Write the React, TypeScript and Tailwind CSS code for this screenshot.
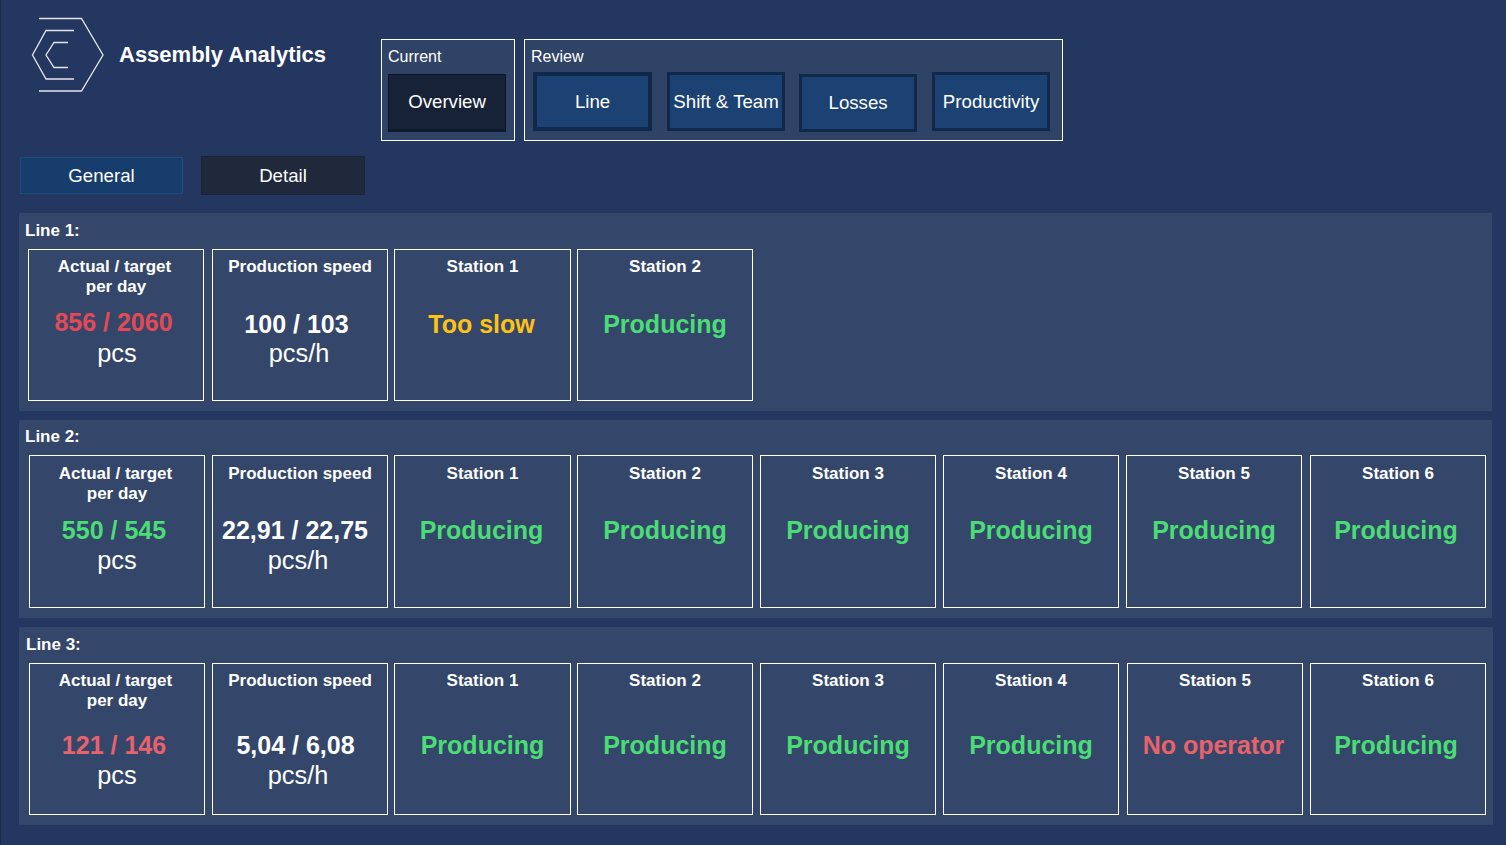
const GREEN = "text-[#4bdc76]";
const RED = "text-[#e8626b]";

type Card = {
  cls: string;
  head: string;
  title: string[];
  value: string;
  color: string;
  unit?: string;
  valueCls?: string;
  unitCls?: string;
};

function StatCard({ cls, head, title, value, color, unit, valueCls = "", unitCls = "" }: Card) {
  return (
    <div className={`shrink-0 border border-white flex flex-col items-center ${cls}`}>
      <div className={`text-[17px] leading-[20px] font-bold text-white text-center ${head}`}>
        {title.map((t, i) => (
          <div key={t} className={title.length > 1 && i === 0 ? "mr-[3px]" : ""}>
            {t}
          </div>
        ))}
      </div>
      <div className={`text-[25px] leading-[30px] font-bold whitespace-nowrap ${color} ${valueCls}`}>{value}</div>
      {unit && <div className={`text-[25.33px] leading-[30px] text-white ${unitCls}`}>{unit}</div>}
    </div>
  );
}

function Panel({ label, labelCls, cls, children }: { label: string; labelCls: string; cls: string; children: React.ReactNode }) {
  return (
    <section className={`h-[198px] ml-[18px] bg-[#34476a] ${cls}`}>
      <div className={`text-[17px] leading-[20px] font-bold text-white ${labelCls}`}>{label}</div>
      {children}
    </section>
  );
}

function NavButton({ label, cls }: { label: string; cls: string }) {
  return (
    <div className={`shrink-0 flex items-center justify-center bg-[#1b4272] border-[#10294a] text-white text-[18.67px] whitespace-nowrap ${cls}`}>
      {label}
    </div>
  );
}

const HEAD_A = "h-[59px] pt-[7px]";
const HEAD_B = "h-[59px] pt-[8px]";
const HEAD_C = "h-[66px] pt-[7px]";

export default function App() {
  return (
    <div
      className="w-[1506px] h-[845px] overflow-hidden bg-[#243760] border-l border-l-[#1c2b4c] text-white"
      style={{ fontFamily: '"Liberation Sans", Arial, sans-serif' }}
    >
      <header className="h-[156px] flex items-start">
        <svg className="ml-[29px] mt-[17px] shrink-0" width="74" height="76" viewBox="30 17 74 76" fill="none" stroke="#e3e6ec" strokeWidth="1.3">
          <path d="M39 18.5H81.5L103 55L81.5 91H39" />
          <path d="M74 30.5H46L32.5 55L46 79H74" />
          <path d="M68 42.5H54L46 55L54 67.5H68" />
        </svg>
        <h1 className="ml-[15px] mt-[41px] text-[22px] leading-[28px] font-bold text-white whitespace-nowrap">Assembly Analytics</h1>
        <div className="ml-[55px] mt-[39px] w-[134px] h-[102px] border border-white bg-[#2f4366] pl-[6px] shrink-0">
          <div className="h-[34px] pt-[7px] text-[16px] leading-[20px]">Current</div>
          <div className="w-[118px] h-[58px] flex items-center justify-center bg-[#182237] border border-[#0f1626] border-b-[3px] border-b-[#101a2e] text-[18.67px]">
            Overview
          </div>
        </div>
        <div className="ml-[9px] mt-[39px] w-[539px] h-[102px] border border-white bg-[#2f4366] pl-[6px] shrink-0">
          <div className="h-[32px] pt-[7px] text-[16px] leading-[20px]">Review</div>
          <div className="flex items-start">
            <NavButton label="Line" cls="w-[119px] h-[59px] border-[4px] ml-[2px]" />
            <NavButton label="Shift &amp; Team" cls="w-[118px] h-[59px] border-[3px] ml-[15px]" />
            <NavButton label="Losses" cls="w-[118px] h-[58px] border-[3px] ml-[14px] mt-[2px]" />
            <NavButton label="Productivity" cls="w-[118px] h-[59px] border-[3px] ml-[15px]" />
          </div>
        </div>
      </header>

      <nav className="h-[57px] flex items-start ml-[19px]">
        <div className="w-[163px] h-[37px] mt-[1px] flex items-center justify-center bg-[#173d6d] border border-[#1d4c80] text-[18.67px]">
          General
        </div>
        <div className="w-[164px] h-[39px] ml-[18px] flex items-center justify-center bg-[#20283b] border border-[#1b2337] text-[18.67px]">
          Detail
        </div>
      </nav>

      <Panel label="Line 1:" labelCls="h-[36px] pt-[8px] pl-[6px]" cls="w-[1473px] mb-[9px]">
        <div className="flex h-[152px]">
          <StatCard cls="ml-[9px] w-[176px]" head={HEAD_A} title={["Actual / target", "per day"]} value="856 / 2060" color="text-[#e34a56]" unit="pcs" valueCls="-mt-[2px] mb-[2px] mr-[5px]" unitCls="-mt-[1px] ml-[2px]" />
          <StatCard cls="ml-[8px] w-[176px]" head={HEAD_A} title={["Production speed"]} value="100 / 103" color="text-white" unit="pcs/h" valueCls="mr-[7px]" unitCls="-mt-[1px] mr-[2px]" />
          <StatCard cls="ml-[6px] w-[177px]" head={HEAD_A} title={["Station 1"]} value="Too slow" color="text-[#fdc215]" valueCls="mr-[2px]" />
          <StatCard cls="ml-[6px] w-[176px]" head={HEAD_A} title={["Station 2"]} value="Producing" color={GREEN} />
        </div>
      </Panel>

      <Panel label="Line 2:" labelCls="h-[35px] pt-[7px] pl-[6px]" cls="w-[1473px] mb-[9px]">
        <div className="flex h-[153px]">
          <StatCard cls="ml-[10px] w-[176px]" head={HEAD_B} title={["Actual / target", "per day"]} value="550 / 545" color={GREEN} unit="pcs" valueCls="mr-[6px]" />
          <StatCard cls="ml-[7px] w-[176px]" head={HEAD_B} title={["Production speed"]} value="22,91 / 22,75" color="text-white" unit="pcs/h" valueCls="mr-[10px]" unitCls="mr-[4px]" />
          <StatCard cls="ml-[6px] w-[177px]" head={HEAD_B} title={["Station 1"]} value="Producing" color={GREEN} valueCls="mr-[2px]" />
          <StatCard cls="ml-[6px] w-[176px]" head={HEAD_B} title={["Station 2"]} value="Producing" color={GREEN} />
          <StatCard cls="ml-[7px] w-[176px]" head={HEAD_B} title={["Station 3"]} value="Producing" color={GREEN} />
          <StatCard cls="ml-[7px] w-[176px]" head={HEAD_B} title={["Station 4"]} value="Producing" color={GREEN} />
          <StatCard cls="ml-[7px] w-[176px]" head={HEAD_B} title={["Station 5"]} value="Producing" color={GREEN} />
          <StatCard cls="ml-[8px] w-[176px]" head={HEAD_B} title={["Station 6"]} value="Producing" color={GREEN} valueCls="mr-[4px]" />
        </div>
      </Panel>

      <Panel label="Line 3:" labelCls="h-[36px] pt-[8px] pl-[7px]" cls="w-[1474px]">
        <div className="flex h-[152px]">
          <StatCard cls="ml-[10px] w-[176px]" head={HEAD_C} title={["Actual / target", "per day"]} value="121 / 146" color={RED} unit="pcs" valueCls="mr-[6px]" />
          <StatCard cls="ml-[7px] w-[176px]" head={HEAD_C} title={["Production speed"]} value="5,04 / 6,08" color="text-white" unit="pcs/h" valueCls="mr-[9px]" unitCls="mr-[4px]" />
          <StatCard cls="ml-[6px] w-[177px]" head={HEAD_C} title={["Station 1"]} value="Producing" color={GREEN} />
          <StatCard cls="ml-[6px] w-[176px]" head={HEAD_C} title={["Station 2"]} value="Producing" color={GREEN} />
          <StatCard cls="ml-[7px] w-[176px]" head={HEAD_C} title={["Station 3"]} value="Producing" color={GREEN} />
          <StatCard cls="ml-[7px] w-[176px]" head={HEAD_C} title={["Station 4"]} value="Producing" color={GREEN} />
          <StatCard cls="ml-[8px] w-[176px]" head={HEAD_C} title={["Station 5"]} value="No operator" color={RED} valueCls="mr-[3px]" />
          <StatCard cls="ml-[7px] w-[176px]" head={HEAD_C} title={["Station 6"]} value="Producing" color={GREEN} valueCls="mr-[4px]" />
        </div>
      </Panel>
    </div>
  );
}
